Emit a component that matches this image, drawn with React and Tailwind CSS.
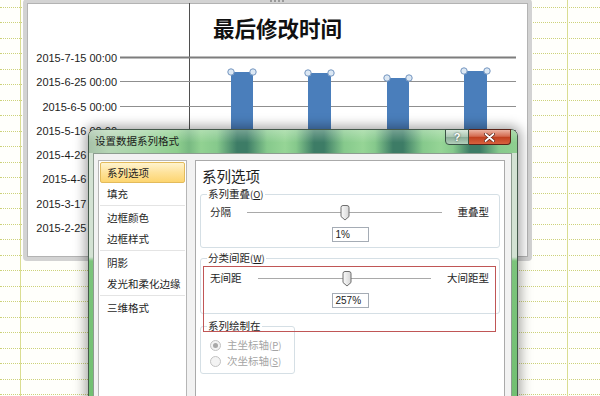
import React from 'react';

const dates = [
  '2015-7-15 00:00',
  '2015-6-25 00:00',
  '2015-6-5 00:00',
  '2015-5-16 00:00',
  '2015-4-26 00:00',
  '2015-4-6 00:00',
  '2015-3-17 00:00',
  '2015-2-25 00:00',
];

const bars = [
  { x: 231, w: 22, y: 72 },
  { x: 308, w: 23, y: 73 },
  { x: 387, w: 22, y: 78 },
  { x: 464, w: 23, y: 71 },
];

// null = separator line in the left list
const navItems = ['系列选项', '填充', null, '边框颜色', '边框样式', null, '阴影', '发光和柔化边缘', null, '三维格式'];

const Thumb = ({ pct }) => (
  <svg
    className="absolute top-[1px] -translate-x-1/2"
    style={{ left: `${pct * 100}%` }}
    width="11"
    height="16"
    viewBox="0 0 11 16"
  >
    <defs>
      <linearGradient id="thumbFill" x1="0" y1="0" x2="1" y2="0">
        <stop offset="0" stopColor="#fbfbfb" />
        <stop offset="1" stopColor="#d6d6d6" />
      </linearGradient>
    </defs>
    <path d="M1.5 2.5 Q1.5 0.5 3.5 0.5 L7.5 0.5 Q9.5 0.5 9.5 2.5 L9.5 11.5 L5.5 15 L1.5 11.5 Z" fill="url(#thumbFill)" stroke="#6e6e6e" />
  </svg>
);

const SliderRow = ({ left, right, pct }) => (
  <div className="flex h-[16px] items-center gap-[16px] pl-[9px] pr-[10px]">
    <span className="shrink-0 text-[10.5px] leading-[16px] text-[#1e1e1e]">{left}</span>
    <div className="relative h-[16px] flex-1">
      <div className="absolute left-0 right-0 top-[8px] h-px bg-[#a9a9a9]" />
      <div className="absolute left-0 right-0 top-[9px] h-px bg-white" />
      <Thumb pct={pct} />
    </div>
    <span className="shrink-0 text-[10.5px] leading-[16px] text-[#1e1e1e]">{right}</span>
  </div>
);

const ValueBox = ({ value }) => (
  <div className="mt-[7px] flex justify-center">
    <div className="h-[15px] w-[37px] border border-[#a5acb5] bg-white pl-[3px] font-['Liberation_Sans',sans-serif] text-[10px] leading-[13px] text-[#222]">
      {value}
    </div>
  </div>
);

const Hotkey = ({ k }) => (
  <span className="text-[9.5px]">
    (<span className="underline">{k}</span>)
  </span>
);

const Radio = ({ checked, label, k }) => (
  <div className="flex h-[16px] items-center gap-[6px] pl-[9px]">
    <span className="flex h-[11px] w-[11px] items-center justify-center rounded-full border border-[#c2c2c2] bg-[#f3f3f3]">
      {checked && <span className="h-[5px] w-[5px] rounded-full bg-[#a8a8a8]" />}
    </span>
    <span className="text-[10.5px] leading-[16px] text-[#a4a4a4]">
      {label}
      <Hotkey k={k} />
    </span>
  </div>
);

const App = () => {
  const overlap = 1;
  const gapWidth = 257;

  return (
    <div className="relative h-[396px] w-[600px] overflow-hidden bg-[#fffffb] font-['Noto_Sans_CJK_SC',sans-serif]">
      {/* spreadsheet grid */}
      <div className="absolute inset-x-0 top-[-8px] flex flex-col">
        {Array.from({ length: 27 }).map((_, i) => (
          <div key={i} className="h-[15.5px] border-b border-dotted border-[#cdd27a]" />
        ))}
      </div>
      <div className="absolute inset-0 flex">
        <div className="w-[21px] border-r border-[#dadd92]" />
        <div className="flex-1" />
        <div className="w-[33px] border-l border-[#dadd92]" />
      </div>

      {/* chart object */}
      <div className="absolute left-[23px] top-[-1px] h-[262px] w-[509px] overflow-hidden rounded-[4px] border-[4px] border-[#d3d3d3] bg-white shadow-[inset_0_0_0_1px_#b3b3b3]">
        <svg className="absolute left-0 top-0" width="501" height="254" viewBox="27 3 501 254">
          <line x1="189.5" y1="3" x2="189.5" y2="257" stroke="#4f4f4f" />
          {dates.map((d, i) => {
            const y = Math.round(57 + i * 24.25) + 0.5;
            return (
              <g key={d}>
                <line x1="120" x2="516" y1={y} y2={y} stroke={i === 0 ? '#7d7d7d' : '#8f8f8f'} strokeWidth={i === 0 ? 1.8 : 1} />
                <text x="117" y={y + 4} textAnchor="end" fontSize="11" fontFamily="'Liberation Sans', Arial, sans-serif" fill="#1d1d1d">
                  {d}
                </text>
              </g>
            );
          })}
          {bars.map((b) => (
            <g key={b.x}>
              <rect x={b.x} y={b.y} width={b.w} height={257 - b.y} fill="#4a7ebb" />
              <circle cx={b.x} cy={b.y} r="3.2" fill="#dce8f4" stroke="#7596c0" />
              <circle cx={b.x + b.w} cy={b.y} r="3.2" fill="#dce8f4" stroke="#7596c0" />
            </g>
          ))}
        </svg>
        <div className="relative pt-[11px] text-center text-[21.5px] font-bold leading-[28px] text-[#111]">最后修改时间</div>
      </div>
      <div className="absolute left-[270px] top-0 h-[2px] w-[14px] border-t-2 border-dotted border-[#9a9a9a]" />

      {/* format data series dialog */}
      <div className="absolute left-[88px] top-[129px] flex h-[290px] w-[430px] flex-col rounded-t-[7px] border border-[#44594b] bg-[linear-gradient(to_bottom,#d3e2d3_0,#d3e2d3_127px,#7cc47c_131px,#70bf70_100%)] pl-[4px] pr-[5px] shadow-[0_0_12px_3px_rgba(0,0,0,0.35)]">
        <div className="-ml-[4px] -mr-[5px] flex h-[23px] items-start justify-between rounded-t-[6px] pl-[6px] pr-[6px] [background-image:linear-gradient(to_bottom,rgba(255,255,255,0.28),rgba(255,255,255,0)_55%),linear-gradient(to_right,#a7c2a9_0px,#b5d6b5_20px,#a4d5a4_55px,#8ecf8e_88px,#78b982_100px,#92d292_112px,#86c98c_128px,#3d7c66_148px,#3d7c66_158px,#86c98c_178px,#96d596_196px,#86c98c_207px,#3d7c66_225px,#3d7c66_235px,#86c98c_255px,#96d596_274px,#86c98c_286px,#3d7c66_304px,#3d7c66_314px,#86c98c_334px,#96d596_352px,#86c98c_364px,#3d7c66_381px,#3d7c66_391px,#86c98c_410px,#90cf90_430px)]">
          <span className="pt-[4px] text-[10.5px] leading-[14px] text-[#1a1a1a]">设置数据系列格式</span>
          <div className="-mt-px flex">
            <div className="flex h-[16px] w-[24px] items-center justify-center rounded-bl-[4px] border border-[#3b5245] bg-[linear-gradient(to_bottom,#d9e8dc,#aac6b2_48%,#8aac97_52%,#b3cfbb)] font-['Liberation_Sans',sans-serif] text-[11px] font-bold leading-none text-white [text-shadow:0_0_2px_#2a3a30]">
              ?
            </div>
            <div className="flex h-[16px] w-[42px] items-center justify-center rounded-br-[4px] border border-l-0 border-[#5b2418] bg-[linear-gradient(to_bottom,#ecb3a2,#d46b50_45%,#c0401f_52%,#d8623f)]">
              <svg width="11" height="9" viewBox="0 0 11 9">
                <path d="M1.5 1 L9.5 8 M9.5 1 L1.5 8" stroke="#5a1e12" strokeWidth="3.2" strokeLinecap="round" />
                <path d="M1.5 1 L9.5 8 M9.5 1 L1.5 8" stroke="#ffffff" strokeWidth="1.8" strokeLinecap="round" />
              </svg>
            </div>
          </div>
        </div>

        <div className="flex flex-1 gap-[8px] border border-[#8d9c90] bg-[#f2f2f2] pl-[4px] pr-[6px] pt-[6px]">
          {/* category list */}
          <div className="flex w-[89px] flex-col border border-[#b6b6b6] bg-white p-[1px]">
            {navItems.map((item, i) =>
              item === null ? (
                <div key={i} className="my-px h-px bg-[#e4e4e4]" />
              ) : (
                <div
                  key={i}
                  className={
                    i === 0
                      ? 'flex h-[21px] items-center rounded-[2px] border border-[#e3bb5c] bg-[linear-gradient(to_bottom,#fff4cf,#fee29a_50%,#fdd570)] pl-[6px] text-[10.5px] text-[#1e1e1e]'
                      : 'flex h-[21px] items-center border border-transparent pl-[6px] text-[10.5px] text-[#1e1e1e]'
                  }
                >
                  {item}
                </div>
              )
            )}
          </div>

          {/* options panel */}
          <div className="relative flex flex-1 flex-col border border-[#aaaaaa] bg-white px-[4px]">
            <div className="pl-[2px] pt-[6px] text-[14.5px] leading-[18px] text-[#1e1e1e]">系列选项</div>

            <fieldset className="mt-[2px] rounded-[3px] border border-[#d5dfe5] pb-[5px]">
              <legend className="ml-[6px] px-[1px] text-[10.5px] leading-[14px] text-[#1e1e1e]">
                系列重叠<Hotkey k="O" />
              </legend>
              <div className="mt-[3px]">
                <SliderRow left="分隔" right="重叠型" pct={(overlap + 100) / 200} />
              </div>
              <ValueBox value={`${overlap}%`} />
            </fieldset>

            <fieldset className="mt-[3px] rounded-[3px] border border-[#d5dfe5] pb-[5px]">
              <legend className="ml-[6px] px-[1px] text-[10.5px] leading-[14px] text-[#1e1e1e]">
                分类间距<Hotkey k="W" />
              </legend>
              <div className="mt-[5px]">
                <SliderRow left="无间距" right="大间距型" pct={gapWidth / 500} />
              </div>
              <ValueBox value={`${gapWidth}%`} />
            </fieldset>

            <fieldset className="mt-[5px] w-[95px] rounded-[3px] border border-[#d5dfe5] pb-[4px]">
              <legend className="ml-[6px] px-[1px] text-[10.5px] leading-[14px] text-[#1e1e1e]">系列绘制在</legend>
              <div className="mt-[4px]">
                <Radio checked label="主坐标轴" k="P" />
                <Radio label="次坐标轴" k="S" />
              </div>
            </fieldset>

            {/* red annotation */}
            <div className="absolute left-[7px] top-[105px] h-[66px] w-[293px] border-[1.5px] border-[#c05656]" />
          </div>
        </div>
      </div>
    </div>
  );
};

export default App;
